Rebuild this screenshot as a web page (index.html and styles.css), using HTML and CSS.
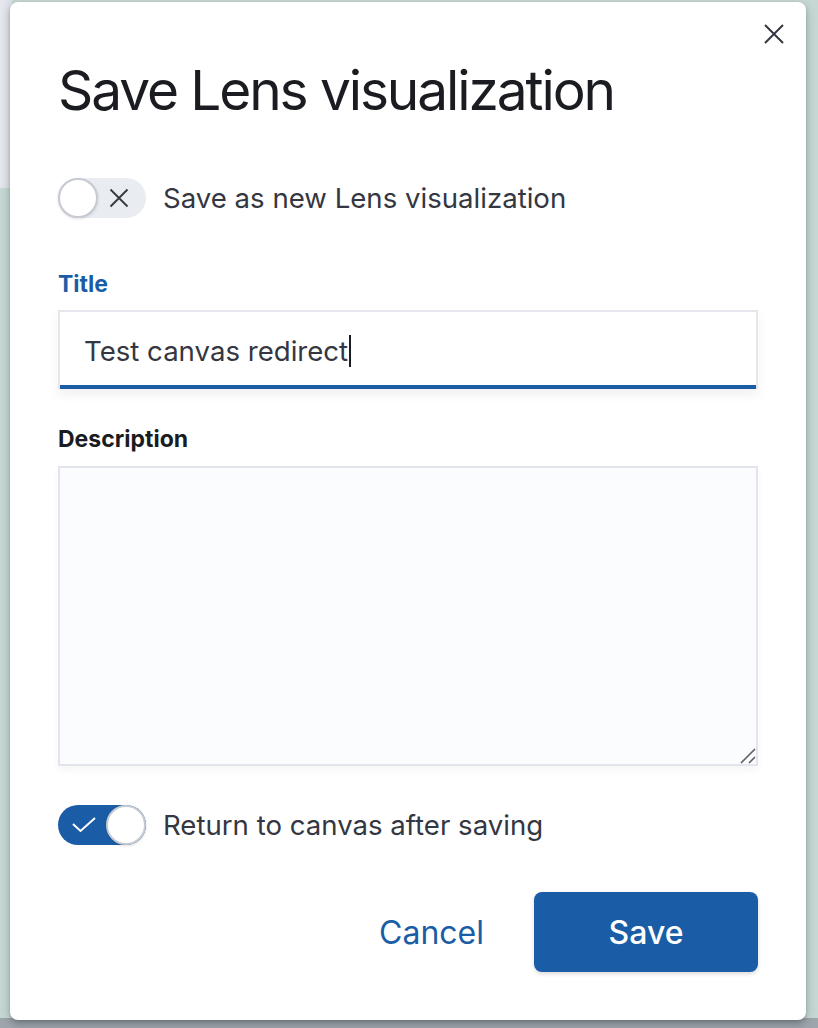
FILE: index.html
```html
<!DOCTYPE html>
<html lang="en">
<head>
<meta charset="utf-8">
<title>Save Lens visualization</title>
<link rel="stylesheet" href="styles.css">
</head>
<body>
<div class="backdrop">
  <div class="modal" role="dialog" aria-labelledby="modal-title">
    <button class="close" aria-label="Close">
      <svg viewBox="0 0 20 20" width="20" height="20"><path d="M1 1 L19 19 M19 1 L1 19" stroke="#343741" stroke-width="2" fill="none"/></svg>
    </button>
    <h1 class="modal-title" id="modal-title">Save Lens visualization</h1>

    <div class="switch-row first-switch">
      <span class="switch off">
        <span class="knob"></span>
        <svg class="switch-icon" viewBox="0 0 20 20" width="20" height="20"><path d="M1.5 1.5 L18.5 18.5 M18.5 1.5 L1.5 18.5" stroke="#343741" stroke-width="1.8" fill="none"/></svg>
      </span>
      <span class="switch-label">Save as new Lens visualization</span>
    </div>

    <div class="field title-field">
      <label class="field-label active">Title</label>
      <div class="text-input" role="textbox">Test canvas redirect<span class="caret"></span></div>
    </div>

    <div class="field desc-field">
      <label class="field-label">Description</label>
      <div class="textarea-wrap">
        <textarea class="textarea"></textarea>
        <svg class="resize-handle" viewBox="0 0 16 16" width="16" height="16"><path d="M1 15 L15 1 M9 15 L15 9" stroke="#5a5d66" stroke-width="1.6" fill="none"/></svg>
      </div>
    </div>

    <div class="switch-row second-switch">
      <span class="switch on">
        <svg class="check-icon" viewBox="0 0 24 16" width="24" height="16"><path d="M1 7 L8.5 14 L23 1" stroke="#ffffff" stroke-width="2" fill="none"/></svg>
        <span class="knob"></span>
      </span>
      <span class="switch-label">Return to canvas after saving</span>
    </div>

    <div class="footer">
      <button class="btn-empty">Cancel</button>
      <button class="btn-primary">Save</button>
    </div>
  </div>
</div>
</body>
</html>
```
FILE: styles.css
```css
html, body {
  margin: 0;
  padding: 0;
}

body {
  width: 818px;
  height: 1028px;
  overflow: hidden;
  font-family: Inter, "Noto Sans", "DejaVu Sans", sans-serif;
  background:
    linear-gradient(to right, #e6e8ee, #dcdfe6) 0 0 / 12px 188px no-repeat,
    linear-gradient(to bottom, #c6d8d4 0, #c6d8d4 1018px, #9ea6ac 1018px);
}

.backdrop {
  padding: 2px 12px 8px 10px;
}

.modal {
  position: relative;
  box-sizing: border-box;
  width: 796px;
  height: 1018px;
  background: #ffffff;
  border-radius: 8px;
  box-shadow: 0 4px 10px rgba(0, 0, 0, 0.25), 0 1px 3px rgba(0, 0, 0, 0.15);
  padding: 57px 48px 0 48px;
  display: flex;
  flex-direction: column;
}

.close {
  position: absolute;
  top: 20px;
  right: 20px;
  width: 24px;
  height: 24px;
  padding: 2px;
  border: 0;
  background: transparent;
  cursor: pointer;
}

.modal-title {
  margin: 0;
  font-size: 55px;
  line-height: 62px;
  font-weight: 400;
  color: #1a1c21;
  letter-spacing: -2.1px;
}

.switch-row {
  display: flex;
  align-items: center;
  gap: 17px;
}

.first-switch {
  margin-top: 57px;
}

.second-switch {
  margin-top: 39px;
}

.switch {
  position: relative;
  display: flex;
  align-items: center;
  width: 88px;
  height: 40px;
  border-radius: 20px;
  box-sizing: border-box;
  flex: none;
}

.switch.off {
  background: #e9ecf1;
}

.switch.on {
  background: #1a5da6;
  justify-content: space-between;
}

.knob {
  width: 40px;
  height: 40px;
  box-sizing: border-box;
  border-radius: 50%;
  background: #ffffff;
  border: 2px solid #c6cad2;
  box-shadow: 0 1px 3px rgba(0, 0, 0, 0.12);
}

.switch.off .switch-icon {
  margin-left: 11px;
}

.switch.on .check-icon {
  margin-left: 14px;
}

.switch-label {
  font-size: 27.6px;
  line-height: 34px;
  color: #343741;
}

.field-label {
  display: block;
  font-size: 23px;
  line-height: 28px;
  font-weight: 700;
  color: #1a1c21;
}

.field-label.active {
  color: #1a5da6;
}

.title-field {
  margin-top: 52px;
}

.desc-field {
  margin-top: 36px;
}

.text-input {
  margin-top: 12px;
  box-sizing: border-box;
  width: 700px;
  height: 79px;
  border: 2px solid #e6e6ee;
  border-bottom: 0;
  box-shadow: inset 0 -4px 0 #1a5da6, 0 6px 10px rgba(0, 0, 0, 0.06);
  padding: 0 24px;
  display: flex;
  align-items: center;
  font-size: 27.6px;
  color: #343741;
  background: #ffffff;
}

.caret {
  display: inline-block;
  width: 2px;
  height: 32px;
  margin-left: 1px;
  background: #1a1c21;
}

.textarea-wrap {
  position: relative;
  margin-top: 13px;
  width: 700px;
  height: 300px;
}

.textarea {
  display: block;
  box-sizing: border-box;
  width: 700px;
  height: 300px;
  margin: 0;
  border: 2px solid #e3e4ec;
  background: #fbfcfd;
  resize: none;
  outline: none;
  font-family: inherit;
  box-shadow: 0 4px 8px rgba(0, 0, 0, 0.04);
}

.resize-handle {
  position: absolute;
  right: 2px;
  bottom: 2px;
}

.footer {
  margin-top: 47px;
  display: flex;
  justify-content: flex-end;
  align-items: center;
  gap: 50px;
}

.btn-empty {
  border: 0;
  background: transparent;
  font-family: inherit;
  font-size: 32px;
  color: #1a5da6;
  padding: 0;
  cursor: pointer;
}

.btn-primary {
  width: 224px;
  height: 80px;
  border: 0;
  border-radius: 8px;
  background: #1a5da6;
  color: #ffffff;
  font-family: inherit;
  font-size: 32px;
  font-weight: 500;
  box-shadow: 0 2px 4px rgba(0, 0, 0, 0.15);
  cursor: pointer;
}
```
